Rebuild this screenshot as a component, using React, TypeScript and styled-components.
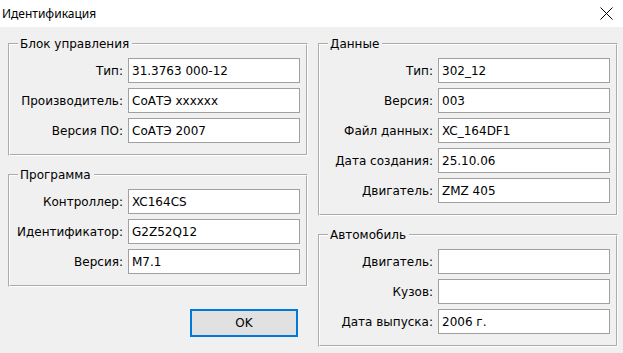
import React from 'react';
import styled, { createGlobalStyle } from 'styled-components';

const GlobalStyle = createGlobalStyle`
  html, body {
    margin: 0;
    padding: 0;
    background: #f0f0f0;
  }
  body {
    font-family: 'DejaVu Sans', 'Liberation Sans', sans-serif;
    font-size: 12px;
    color: #000;
  }
`;

interface Field {
  label: string;
  value: string;
}

const controlUnit: Field[] = [
  { label: 'Тип:', value: '31.3763 000-12' },
  { label: 'Производитель:', value: 'СоАТЭ xxxxxx' },
  { label: 'Версия ПО:', value: 'СоАТЭ 2007' },
];

const program: Field[] = [
  { label: 'Контроллер:', value: 'XC164CS' },
  { label: 'Идентификатор:', value: 'G2Z52Q12' },
  { label: 'Версия:', value: 'M7.1' },
];

const data: Field[] = [
  { label: 'Тип:', value: '302_12' },
  { label: 'Версия:', value: '003' },
  { label: 'Файл данных:', value: 'XC_164DF1' },
  { label: 'Дата создания:', value: '25.10.06' },
  { label: 'Двигатель:', value: 'ZMZ 405' },
];

const vehicle: Field[] = [
  { label: 'Двигатель:', value: '' },
  { label: 'Кузов:', value: '' },
  { label: 'Дата выпуска:', value: '2006 г.' },
];

const Window = styled.div`
  width: 623px;
  height: 353px;
  display: flex;
  flex-direction: column;
  background: #f0f0f0;
`;

const TitleBar = styled.div`
  height: 27px;
  flex: none;
  background: #fff;
  display: flex;
  align-items: center;
  justify-content: space-between;
  padding: 0 10px 0 2px;
  font-family: 'Noto Sans', 'Open Sans', sans-serif;
  font-size: 12px;
`;

const CloseIcon = styled.svg`
  width: 13px;
  height: 13px;
  margin-top: -1px;
`;

const Body = styled.div`
  display: grid;
  grid-template-columns: 300px 300px;
  column-gap: 10px;
  padding: 10px 0 0 8px;
`;

const Column = styled.div`
  display: flex;
  flex-direction: column;
  gap: 12px;
`;

const Group = styled.fieldset`
  margin: 0;
  padding: 7px 6px 11px 0;
  border: 2px groove #fff;
  min-width: 0;
`;

const Legend = styled.legend`
  margin-left: 8px;
  padding: 0 3px 0 2px;
  line-height: 14px;
  color: #000;
`;

const Grid = styled.div`
  display: grid;
  grid-template-columns: 113px 172px;
  column-gap: 5px;
  row-gap: 5px;
  align-items: center;
`;

const Label = styled.label`
  text-align: right;
  white-space: nowrap;
`;

const Input = styled.div`
  box-sizing: border-box;
  height: 25px;
  background: #fff;
  border: 1px solid #a0a0a0;
  padding: 0 3px;
  display: flex;
  align-items: center;
  white-space: nowrap;
  overflow: hidden;
`;

const ButtonRow = styled.div`
  display: flex;
  justify-content: flex-end;
  padding: 10px 10px 0 0;
`;

const OkButton = styled.button`
  width: 108px;
  height: 28px;
  box-sizing: border-box;
  border: 2px solid #0078d7;
  background: #e1e1e1;
  font-family: 'DejaVu Sans', 'Liberation Sans', sans-serif;
  font-size: 12px;
  color: #000;
  padding: 0;
`;

const FieldGroup = ({ title, fields }: { title: string; fields: Field[] }) => (
  <Group>
    <Legend>{title}</Legend>
    <Grid>
      {fields.map(({ label, value }) => (
        <React.Fragment key={label}>
          <Label>{label}</Label>
          <Input>{value}</Input>
        </React.Fragment>
      ))}
    </Grid>
  </Group>
);

const App = () => {
  return (
    <Window>
      <GlobalStyle />
      <TitleBar>
        <span>Идентификация</span>
        <CloseIcon viewBox="0 0 13 13">
          <path d="M0.5 0.5 L12.5 12.5 M12.5 0.5 L0.5 12.5" stroke="#000" strokeWidth="1" fill="none" />
        </CloseIcon>
      </TitleBar>
      <Body>
        <Column>
          <FieldGroup title="Блок управления" fields={controlUnit} />
          <FieldGroup title="Программа" fields={program} />
          <ButtonRow>
            <OkButton>OK</OkButton>
          </ButtonRow>
        </Column>
        <Column>
          <FieldGroup title="Данные" fields={data} />
          <FieldGroup title="Автомобиль" fields={vehicle} />
        </Column>
      </Body>
    </Window>
  );
};

export default App;
